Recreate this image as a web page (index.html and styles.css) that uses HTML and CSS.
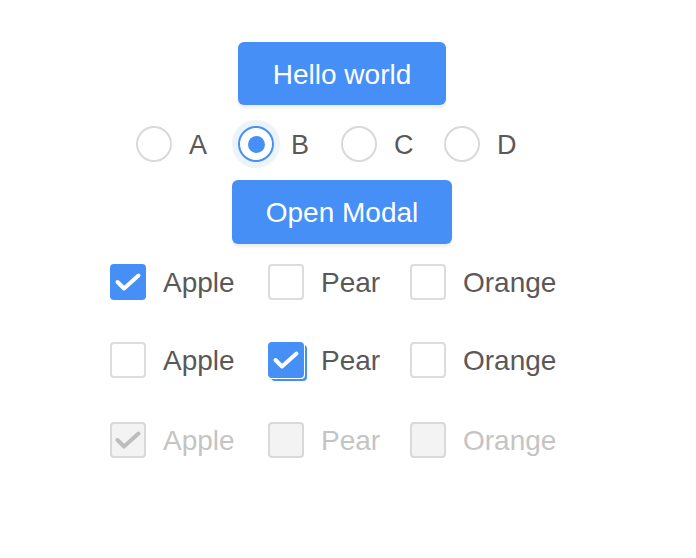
FILE: index.html
```html
<!DOCTYPE html>
<html>
<head>
<meta charset="utf-8">
<link rel="stylesheet" href="styles.css">
</head>
<body>
<main class="page">
  <button class="btn btn-hello">Hello world</button>

  <div class="radio-group">
    <label class="radio"><span class="radio-circle"></span><span class="radio-label">A</span></label>
    <label class="radio checked"><span class="radio-circle"></span><span class="radio-label">B</span></label>
    <label class="radio"><span class="radio-circle"></span><span class="radio-label">C</span></label>
    <label class="radio"><span class="radio-circle"></span><span class="radio-label">D</span></label>
  </div>

  <button class="btn btn-modal">Open Modal</button>

  <div class="cb-row row-1">
    <label class="cb checked"><span class="cb-box"><svg viewBox="0 0 36 36"><polyline points="7.5,18 14,24.5 28.5,11.5"/></svg></span><span class="cb-label">Apple</span></label>
    <label class="cb"><span class="cb-box"></span><span class="cb-label">Pear</span></label>
    <label class="cb"><span class="cb-box"></span><span class="cb-label">Orange</span></label>
  </div>

  <div class="cb-row row-2">
    <label class="cb"><span class="cb-box"></span><span class="cb-label">Apple</span></label>
    <label class="cb checked focused"><span class="cb-box"><svg viewBox="0 0 36 36"><polyline points="7.5,18 14,24.5 28.5,11.5"/></svg></span><span class="cb-label">Pear</span></label>
    <label class="cb"><span class="cb-box"></span><span class="cb-label">Orange</span></label>
  </div>

  <div class="cb-row row-3 disabled">
    <label class="cb checked"><span class="cb-box"><svg viewBox="0 0 36 36"><polyline points="7.5,18 14,24.5 28.5,11.5"/></svg></span><span class="cb-label">Apple</span></label>
    <label class="cb"><span class="cb-box"></span><span class="cb-label">Pear</span></label>
    <label class="cb"><span class="cb-box"></span><span class="cb-label">Orange</span></label>
  </div>
</main>
</body>
</html>
```

FILE: styles.css
```css
html, body {
  margin: 0;
  padding: 0;
  background: #ffffff;
}

body {
  font-family: "Liberation Sans", Arial, sans-serif;
  color: #595959;
}

.page {
  width: 684px;
  padding-top: 42px;
  display: flex;
  flex-direction: column;
  align-items: center;
}

.btn {
  border: none;
  background: #458ff6;
  color: #ffffff;
  font-family: "Liberation Sans", Arial, sans-serif;
  font-size: 28px;
  border-radius: 6px;
  box-shadow: 0 3px 3px rgba(0, 0, 0, 0.07);
  padding: 2px 0 0;
  cursor: pointer;
}

.btn-hello {
  width: 208px;
  height: 63px;
}

.btn-modal {
  width: 220px;
  height: 64px;
  margin-top: 18px;
}

/* radios */
.radio-group {
  align-self: flex-start;
  margin-left: 136px;
  margin-top: 21px;
  display: grid;
  grid-template-columns: 102px 103px 103px auto;
  height: 36px;
}

.radio {
  display: flex;
  align-items: center;
  height: 36px;
}

.radio-circle {
  box-sizing: border-box;
  width: 36px;
  height: 36px;
  border-radius: 50%;
  border: 2px solid #d9d9d9;
  background: #fff;
  flex: none;
  display: flex;
  align-items: center;
  justify-content: center;
}

.radio.checked .radio-circle {
  border-color: #458ff6;
  box-shadow: 0 0 0 6px #ebf3fe;
}

.radio.checked .radio-circle::after {
  content: "";
  width: 17px;
  height: 17px;
  border-radius: 50%;
  background: #458ff6;
}

.radio-label {
  margin-left: 17px;
  font-size: 27px;
  line-height: 36px;
  padding-top: 2px;
}

/* checkboxes */
.cb-row {
  align-self: flex-start;
  margin-left: 110px;
  display: grid;
  grid-template-columns: 158px 142px auto;
  height: 36px;
}

.row-1 { margin-top: 20px; }
.row-2 { margin-top: 42px; }
.row-3 { margin-top: 44px; }

.cb {
  display: flex;
  align-items: center;
  height: 36px;
}

.cb-box {
  box-sizing: border-box;
  width: 36px;
  height: 36px;
  border: 2px solid #dcdcdc;
  border-radius: 4px;
  background: #fff;
  flex: none;
  display: block;
}

.cb-box svg {
  display: block;
  width: 36px;
  height: 36px;
  margin: -2px;
}

.cb-box polyline {
  fill: none;
  stroke: #ffffff;
  stroke-width: 4;
  stroke-linecap: round;
  stroke-linejoin: round;
}

.cb.checked .cb-box {
  background: #458ff6;
  border-color: #458ff6;
}

.cb.focused .cb-box {
  box-shadow: 1px 1px 0 0 #ffffff, 3px 3px 0 0 #458ff6;
}

.cb-label {
  margin-left: 17px;
  font-size: 28px;
  line-height: 36px;
  padding-top: 2px;
}

.disabled .cb-label {
  color: #c4c4c4;
}

.disabled .cb-box,
.disabled .cb.checked .cb-box {
  background: #f3f3f3;
  border-color: #d9d9d9;
}

.disabled .cb-box polyline {
  stroke: #bdbdbd;
}
```
